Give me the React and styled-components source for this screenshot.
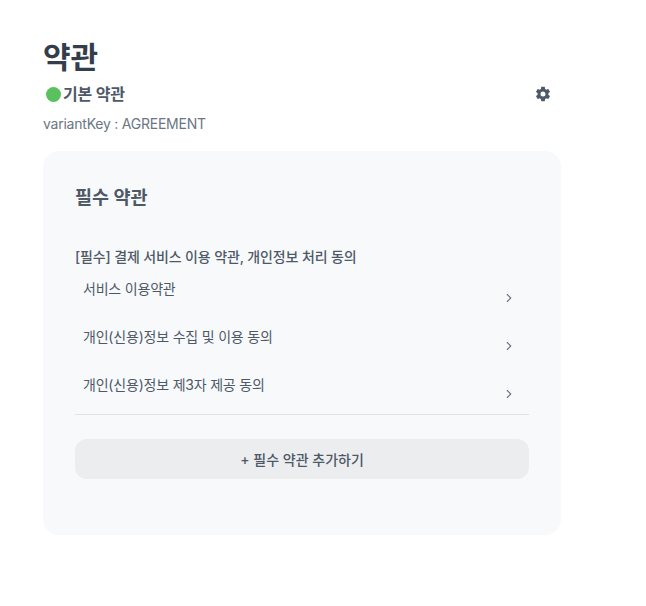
import styled, { createGlobalStyle } from 'styled-components'
import { ChevronRight } from 'lucide-react'
import { IoSettingsSharp } from 'react-icons/io5'

const GlobalStyle = createGlobalStyle`
  body {
    margin: 0;
    background: #ffffff;
    font-family: Inter, 'Noto Sans CJK KR', sans-serif;
  }
`

const Page = styled.div`
  width: 646px;
  height: 606px;
  box-sizing: border-box;
  padding: 38px 85px 0 43px;
`

const Title = styled.h1`
  margin: 0;
  font-size: 30px;
  line-height: 38px;
  font-weight: 700;
  color: #333d4b;
`

const VariantRow = styled.div`
  display: flex;
  align-items: center;
  justify-content: space-between;
  height: 24px;
  margin-top: 6px;
  padding: 0 10px 0 3px;
`

const VariantName = styled.div`
  display: flex;
  align-items: center;
  gap: 2px;
  font-size: 16px;
  line-height: 22px;
  font-weight: 700;
  letter-spacing: -0.2px;
  color: #4e5968;
`

const StatusDot = styled.span`
  width: 15px;
  height: 15px;
  border-radius: 50%;
  background: #5ac15f;
`

const GearButton = styled.button`
  display: flex;
  padding: 0;
  border: none;
  background: none;
  color: #4e5968;
  font-size: 16px;
`

const VariantKey = styled.div`
  margin-top: 8px;
  font-size: 14px;
  line-height: 20px;
  letter-spacing: -0.23px;
  color: #6b7684;
`

const Card = styled.section`
  box-sizing: border-box;
  height: 384px;
  margin-top: 17px;
  padding: 32px;
  border-radius: 16px;
  background: #f8f9fb;
`

const CardTitle = styled.h2`
  margin: 0;
  font-size: 18.5px;
  line-height: 28px;
  font-weight: 700;
  color: #4e5968;
`

const GroupTitle = styled.div`
  margin: 36px 0 10px;
  font-size: 14px;
  line-height: 20px;
  font-weight: 500;
  letter-spacing: -0.13px;
  color: #4e5968;
`

const TermList = styled.ul`
  display: flex;
  flex-direction: column;
  gap: 8px;
  margin: 0;
  padding: 0 0 1px;
  list-style: none;
  border-bottom: 1px solid #e0e2e6;
`

const TermRow = styled.li`
  display: flex;
  justify-content: space-between;
  box-sizing: border-box;
  height: 40px;
  padding: 2px 13px 0 8px;
  font-size: 14px;
  line-height: 20px;
  letter-spacing: -0.2px;
  color: #4e5968;

  svg {
    margin-top: 12px;
    color: #6b7684;
  }
`

const AddButton = styled.button`
  display: block;
  width: 100%;
  height: 40px;
  margin-top: 24px;
  border: none;
  border-radius: 12px;
  background: #ecedef;
  font-family: inherit;
  font-size: 14px;
  font-weight: 500;
  color: #4e5968;
`

const terms = [
  '서비스 이용약관',
  '개인(신용)정보 수집 및 이용 동의',
  '개인(신용)정보 제3자 제공 동의',
]

export default function App() {
  return (
    <>
      <GlobalStyle />
      <Page>
        <Title>약관</Title>
        <VariantRow>
          <VariantName>
            <StatusDot />
            기본 약관
          </VariantName>
          <GearButton aria-label="설정">
            <IoSettingsSharp />
          </GearButton>
        </VariantRow>
        <VariantKey>variantKey : AGREEMENT</VariantKey>
        <Card>
          <CardTitle>필수 약관</CardTitle>
          <GroupTitle>[필수] 결제 서비스 이용 약관, 개인정보 처리 동의</GroupTitle>
          <TermList>
            {terms.map(term => (
              <TermRow key={term}>
                {term}
                <ChevronRight size={14} />
              </TermRow>
            ))}
          </TermList>
          <AddButton>+ 필수 약관 추가하기</AddButton>
        </Card>
      </Page>
    </>
  )
}
